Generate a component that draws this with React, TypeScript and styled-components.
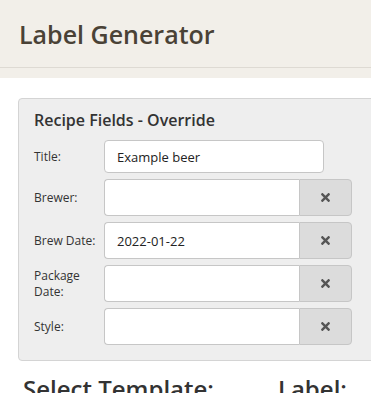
import React, { useState } from 'react';
import styled, { createGlobalStyle } from 'styled-components';
import { FaTimes } from 'react-icons/fa';

const GlobalStyle = createGlobalStyle`
  html, body { margin: 0; padding: 0; }
  body {
    font-family: 'Open Sans', 'Liberation Sans', sans-serif;
    color: #333;
    background: #f2efe9;
    overflow: hidden;
  }
  * { box-sizing: border-box; }
`;

const Header = styled.header`
  height: 68px;
  padding: 0 19px;
  display: flex;
  align-items: center;
  border-bottom: 1px solid #dedad3;
`;

const PageTitle = styled.h1`
  margin: 0;
  font-size: 25px;
  font-weight: 600;
  color: #4a4236;
`;

const Main = styled.main`
  margin-top: 10px;
  background: #fff;
  padding: 20px 0 0 18px;
  min-height: 400px;
`;

const Panel = styled.section`
  width: 372px;
  background: #eeeeee;
  border: 1px solid #d4d4d4;
  border-radius: 4px;
  padding: 11px 15px 15px 15px;
`;

const PanelTitle = styled.h2`
  margin: 0 0 9px 0;
  font-size: 16px;
  font-weight: 600;
  line-height: 21px;
  color: #333;
`;

const Rows = styled.div`
  display: flex;
  flex-direction: column;
  gap: 6px;
`;

const Row = styled.div`
  display: grid;
  grid-template-columns: 70px auto;
  align-items: center;
`;

const Label = styled.label`
  font-size: 12px;
  line-height: 16px;
  color: #333;
  padding-right: 8px;
`;

const Group = styled.div`
  display: flex;
  height: 37px;
  width: 248px;
`;

const TextInput = styled.input<{ $grouped?: boolean }>`
  height: ${p => (p.$grouped ? '37px' : '33px')};
  width: ${p => (p.$grouped ? '195px' : '220px')};
  border: 1px solid #c6c6c6;
  border-radius: ${p => (p.$grouped ? '4px 0 0 4px' : '4px')};
  ${p => (p.$grouped ? 'border-right: none;' : '')}
  background: #fff;
  padding: 0 12px;
  font-family: 'Open Sans', 'Liberation Sans', sans-serif;
  font-size: 13px;
  color: #222;
  outline: none;
`;

const ClearButton = styled.button`
  width: 53px;
  height: 37px;
  border: 1px solid #c6c6c6;
  border-radius: 0 4px 4px 0;
  background: #dcdcdc;
  color: #555;
  display: flex;
  align-items: center;
  justify-content: center;
  padding: 0;
  cursor: pointer;
`;

const Columns = styled.div`
  display: flex;
  padding-top: 11px;
`;

const SectionTitle = styled.h2<{ $width: string }>`
  margin: 0;
  width: ${p => p.$width};
  font-size: 24px;
  font-weight: 600;
  color: #333;
  padding-left: 5px;
  white-space: nowrap;
`;

type Field = { key: string; label: string; value: string };

const initialFields: Field[] = [
  { key: 'brewer', label: 'Brewer:', value: '' },
  { key: 'brewDate', label: 'Brew Date:', value: '2022-01-22' },
  { key: 'packageDate', label: 'Package Date:', value: '' },
  { key: 'style', label: 'Style:', value: '' },
];

export default function App() {
  const [title, setTitle] = useState('Example beer');
  const [fields, setFields] = useState(initialFields);

  const update = (key: string, value: string) =>
    setFields(fs => fs.map(f => (f.key === key ? { ...f, value } : f)));

  return (
    <>
      <GlobalStyle />
      <Header>
        <PageTitle>Label Generator</PageTitle>
      </Header>
      <Main>
        <Panel>
          <PanelTitle>Recipe Fields - Override</PanelTitle>
          <Rows>
            <Row>
              <Label>Title:</Label>
              <TextInput value={title} onChange={e => setTitle(e.target.value)} />
            </Row>
            {fields.map(f => (
              <Row key={f.key}>
                <Label>{f.label}</Label>
                <Group>
                  <TextInput $grouped value={f.value} onChange={e => update(f.key, e.target.value)} />
                  <ClearButton onClick={() => update(f.key, '')}>
                    <FaTimes size={13} />
                  </ClearButton>
                </Group>
              </Row>
            ))}
          </Rows>
        </Panel>
        <Columns>
          <SectionTitle $width="260px">Select Template:</SectionTitle>
          <SectionTitle $width="100px">Label:</SectionTitle>
        </Columns>
      </Main>
    </>
  );
}
